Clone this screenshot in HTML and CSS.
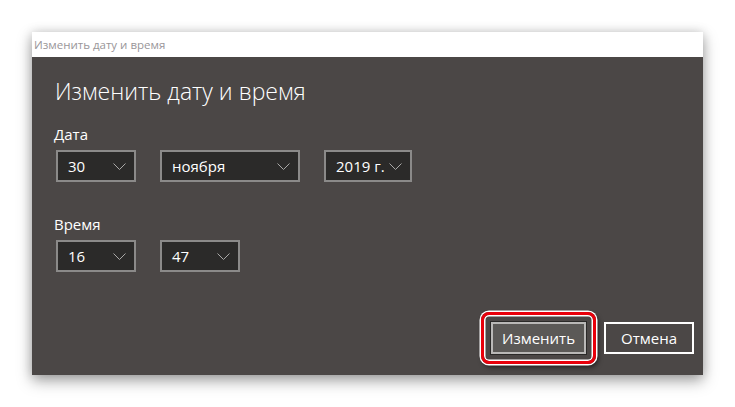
FILE: index.html
```html
<!DOCTYPE html>
<html lang="ru">
<head>
<meta charset="utf-8">
<title>Изменить дату и время</title>
<link rel="stylesheet" href="styles.css">
</head>
<body>
<div class="window">
  <div class="titlebar">Изменить дату и время</div>
  <div class="content">
    <h1 class="heading">Изменить дату и время</h1>
    <div class="label">Дата</div>
    <div class="row">
      <div class="select w80"><span>30</span><svg class="chev" viewBox="0 0 13 7"><path d="M0.5 0.5 L6.5 6.5 L12.5 0.5"/></svg></div>
      <div class="select w140"><span>ноября</span><svg class="chev" viewBox="0 0 13 7"><path d="M0.5 0.5 L6.5 6.5 L12.5 0.5"/></svg></div>
      <div class="select w88"><span>2019 г.</span><svg class="chev" viewBox="0 0 13 7"><path d="M0.5 0.5 L6.5 6.5 L12.5 0.5"/></svg></div>
    </div>
    <div class="label label-time">Время</div>
    <div class="row">
      <div class="select w80"><span>16</span><svg class="chev" viewBox="0 0 13 7"><path d="M0.5 0.5 L6.5 6.5 L12.5 0.5"/></svg></div>
      <div class="select w80"><span>47</span><svg class="chev" viewBox="0 0 13 7"><path d="M0.5 0.5 L6.5 6.5 L12.5 0.5"/></svg></div>
    </div>
    <div class="actions">
      <div class="highlight"><button class="btn btn-primary">Изменить</button></div>
      <button class="btn btn-cancel">Отмена</button>
    </div>
  </div>
</div>
</body>
</html>
```

FILE: styles.css
```css
html, body {
  margin: 0;
  padding: 0;
  background: #ffffff;
}
body {
  font-family: "Segoe UI", "Open Sans", "Noto Sans", sans-serif;
  width: 735px;
  height: 407px;
  overflow: hidden;
}
.window {
  margin: 32px 0 0 32px;
  width: 671px;
  box-shadow: 0 6px 14px rgba(0, 0, 0, 0.35), 0 0 10px rgba(0, 0, 0, 0.15);
}
.titlebar {
  height: 25px;
  background: #ffffff;
  color: #999699;
  font-size: 11.5px;
  line-height: 25px;
  padding-left: 2px;
}
.content {
  height: 318px;
  background: #4b4746;
  box-sizing: border-box;
  padding: 18px 9px 0 24px;
  display: flex;
  flex-direction: column;
  color: #ffffff;
}
.heading {
  margin: 0 0 0 -1px;
  font-weight: 300;
  font-size: 23px;
  line-height: 32px;
  color: #ffffff;
}
.label {
  margin-top: 17px;
  font-size: 15px;
  line-height: 20px;
  margin-left: -2px;
}
.label-time {
  margin-top: 32px;
}
.row {
  display: flex;
  gap: 24px;
  margin-top: 6px;
}
.select {
  box-sizing: border-box;
  height: 32px;
  border: 2px solid #8b8a89;
  background: #2b2a29;
  display: flex;
  align-items: center;
  justify-content: space-between;
  padding: 0 8px 0 10px;
  font-size: 15px;
  color: #ffffff;
}
.w80 { width: 80px; }
.w140 { width: 140px; }
.w88 { width: 88px; }
.chev {
  width: 13px;
  height: 7px;
  fill: none;
  stroke: #a9a8a7;
  stroke-width: 1;
}
.actions {
  margin-top: auto;
  margin-bottom: 21px;
  display: flex;
  justify-content: flex-end;
  align-items: center;
  gap: 18px;
}
.btn {
  box-sizing: border-box;
  height: 32px;
  font-family: inherit;
  font-size: 15px;
  color: #ffffff;
  padding: 0;
  margin: 0;
}
.highlight {
  position: relative;
  display: flex;
}
.highlight::before {
  content: "";
  position: absolute;
  left: -10px;
  right: -10px;
  top: -10px;
  bottom: -10px;
  border: 3px solid #e8000b;
  border-radius: 8px;
  box-shadow: 0 0 0 1.5px #ffffff, inset 0 0 0 1.5px #ffffff, 2px 3px 5px rgba(0, 0, 0, 0.6);
  pointer-events: none;
}
.btn-primary {
  width: 95px;
  background: #5b5957;
  border: 2px solid #b9b8b7;
  outline: 1px solid #2a2928;
}
.btn-cancel {
  width: 90px;
  background: transparent;
  border: 2px solid #ffffff;
}
```
